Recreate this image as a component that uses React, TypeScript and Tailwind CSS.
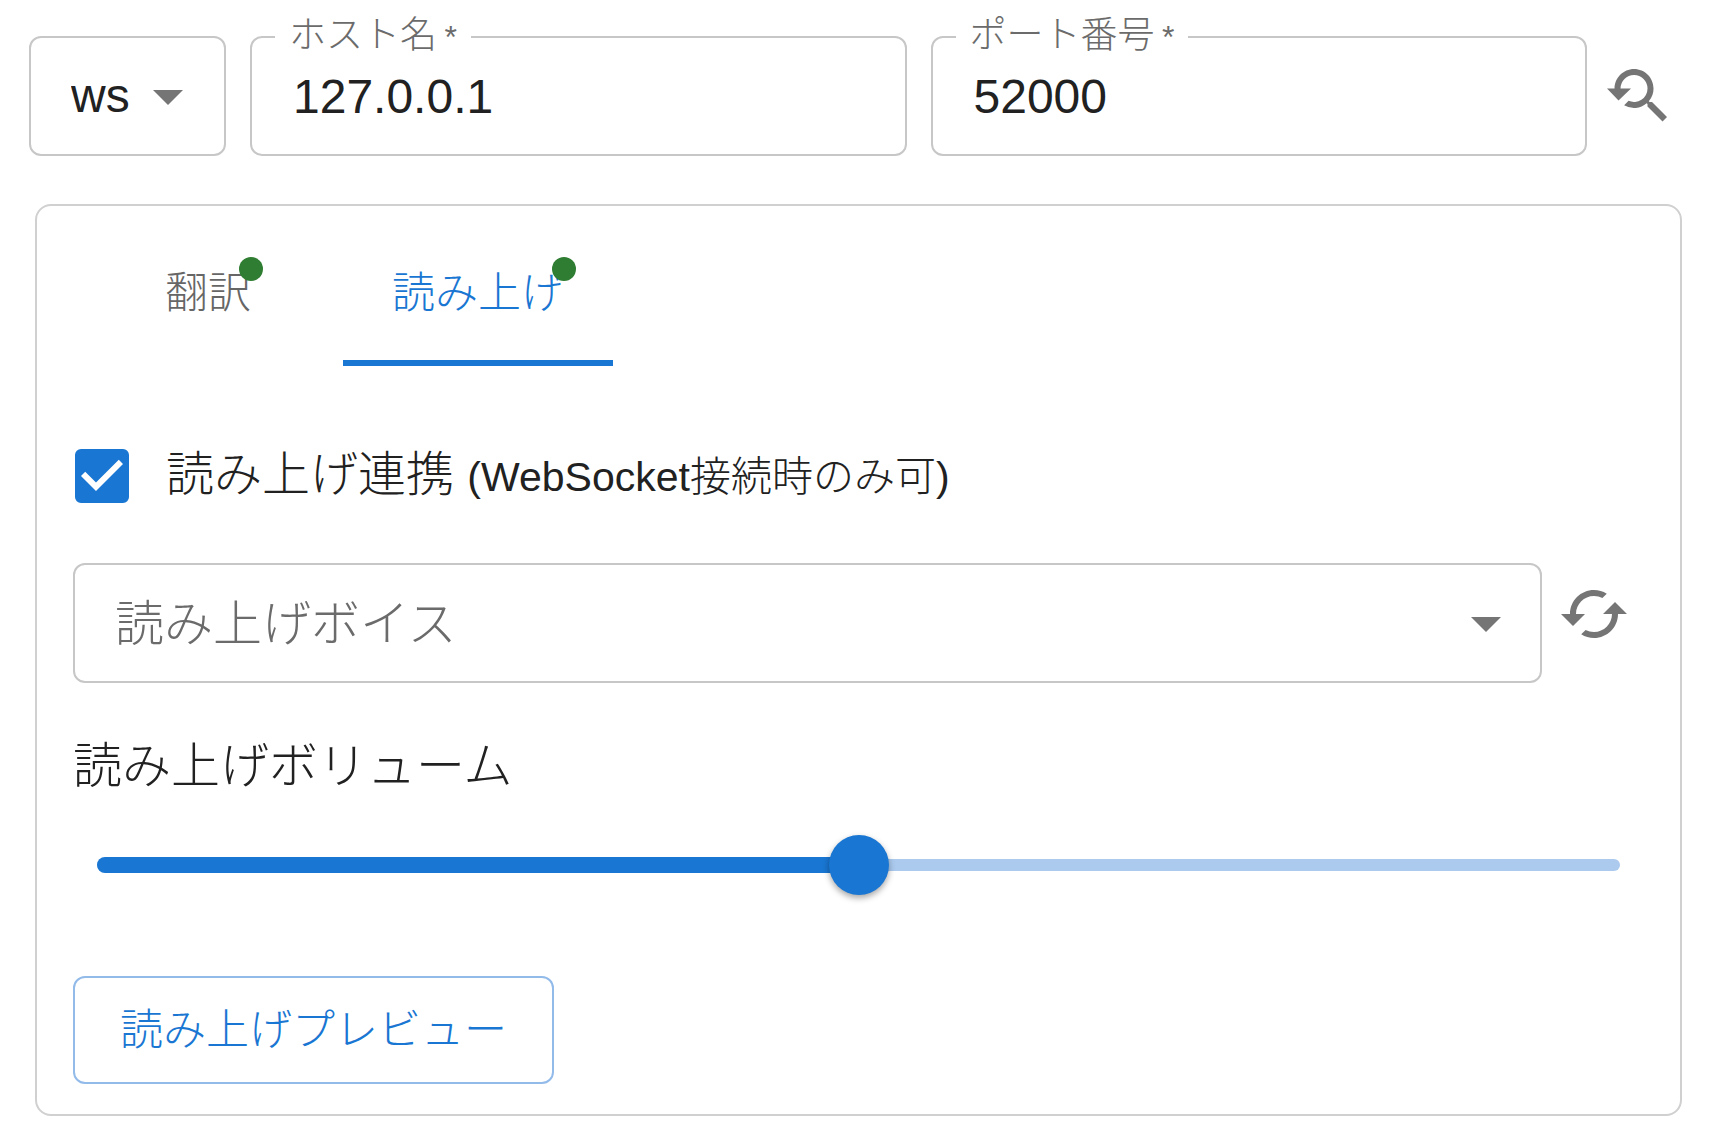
import { useState } from "react";
import { MdArrowDropDown, MdCached, MdYoutubeSearchedFor } from "react-icons/md";

type FieldProps = {
  id: string;
  label: string;
  value: string;
  onChange: (value: string) => void;
};

function OutlinedField({ id, label, value, onChange }: FieldProps) {
  return (
    <div className="relative min-w-0 flex-1">
      <input
        id={id}
        required
        value={value}
        onChange={(e) => onChange(e.target.value)}
        className="h-[120px] w-full rounded-xl border-2 border-[#c7c7c7] bg-white px-[41px] text-5xl text-[#212121] outline-none"
      />
      <label
        htmlFor={id}
        className="absolute left-[25px] -top-6 bg-white px-[14px] text-[37px] leading-[48px] whitespace-nowrap text-[#6b6b6b]"
      >
        {label}&thinsp;<span className="text-[32px]">*</span>
      </label>
    </div>
  );
}

type TabProps = { label: string; active: boolean; onClick: () => void };

function Tab({ label, active, onClick }: TabProps) {
  return (
    <button
      type="button"
      role="tab"
      aria-selected={active}
      onClick={onClick}
      className={
        active
          ? "flex h-36 min-w-[270px] items-center justify-center border-b-6 border-[#1976d2] px-12 pt-1 text-[#1976d2]"
          : "flex h-36 min-w-[270px] items-center justify-center border-b-6 border-transparent px-12 pt-1 text-[#666666]"
      }
    >
      <span className="relative text-[43px] leading-[48px]">
        {label}
        <span className="absolute -top-3 -right-3 size-6 rounded-full bg-[#2e7d32]" />
      </span>
    </button>
  );
}

export default function App() {
  const [scheme, setScheme] = useState("ws");
  const [host, setHost] = useState("127.0.0.1");
  const [port, setPort] = useState("52000");
  const [tab, setTab] = useState("speech");
  const [enabled, setEnabled] = useState(true);
  const [volume, setVolume] = useState(50);

  return (
    <main className="min-h-screen bg-white pt-9 pr-7 pb-[22px] pl-[29px] font-['Liberation_Sans','Noto_Sans_CJK_JP',sans-serif] font-light text-[#212121]">
      <div className="flex items-center gap-6 pr-[9px]">
        <div className="relative shrink-0">
          <select
            aria-label="プロトコル"
            value={scheme}
            onChange={(e) => setScheme(e.target.value)}
            className="h-[120px] w-[197px] appearance-none rounded-xl border-2 border-[#c7c7c7] bg-white pl-10 text-5xl outline-none"
          >
            <option>ws</option>
            <option>wss</option>
          </select>
          <MdArrowDropDown className="pointer-events-none absolute top-6 right-[22px] size-[72px] text-[#757575]" />
        </div>
        <OutlinedField id="host" label="ホスト名" value={host} onChange={setHost} />
        <OutlinedField id="port" label="ポート番号" value={port} onChange={setPort} />
        <button type="button" aria-label="再検索" className="-ml-[10px] shrink-0 text-[#757575]">
          <MdYoutubeSearchedFor className="size-[72px]" />
        </button>
      </div>

      <section className="mt-12 ml-[6px] rounded-2xl border-2 border-[#d0d0d0] px-9 pt-4 pb-[30px]">
        <div role="tablist" className="flex">
          <Tab label="翻訳" active={tab === "translate"} onClick={() => setTab("translate")} />
          <Tab label="読み上げ" active={tab === "speech"} onClick={() => setTab("speech")} />
        </div>

        <label className="mt-[74px] flex h-[72px] items-center gap-[37px] pl-[2px]">
          <span className="relative size-[54px] shrink-0">
            <input
              type="checkbox"
              checked={enabled}
              onChange={(e) => setEnabled(e.target.checked)}
              className="peer block size-[54px] appearance-none rounded-md border-6 border-[#666666] checked:border-[#1976d2] checked:bg-[#1976d2]"
            />
            <svg
              viewBox="3 3 18 18"
              className="pointer-events-none absolute inset-0 hidden size-full fill-white peer-checked:block"
            >
              <path d="M10 17l-5-5 1.41-1.41L10 14.17l7.59-7.59L19 8l-9 9z" />
            </svg>
          </span>
          <span className="text-5xl leading-[72px] whitespace-nowrap">
            読み上げ連携 <small className="text-[41px]">(WebSocket接続時のみ可)</small>
          </span>
        </label>

        <div className="mt-[51px] flex items-start gap-4">
          <div className="relative min-w-0 flex-1">
            <select
              aria-label="読み上げボイス"
              defaultValue=""
              className="h-[120px] w-full appearance-none rounded-xl border-2 border-[#c7c7c7] bg-white pt-1 pl-10 text-[49px] text-[#6b6b6b] outline-none"
            >
              <option value="">読み上げボイス</option>
            </select>
            <MdArrowDropDown className="pointer-events-none absolute top-6 right-5 size-[72px] text-[#757575]" />
          </div>
          <button type="button" aria-label="更新" className="mt-[15px] mr-[14px] shrink-0 text-[#757575]">
            <MdCached className="size-[72px]" />
          </button>
        </div>

        <label htmlFor="volume" className="mt-[47px] block text-[49px] leading-[72px]">
          読み上げボリューム
        </label>
        <div className="relative mx-6 mt-[33px] h-[60px]">
          <div className="absolute inset-x-0 top-6 h-3 rounded-full bg-[#abcaee]" />
          <div
            className="absolute top-[22px] left-0 h-4 rounded-full bg-[#1976d2]"
            style={{ width: `${volume}%` }}
          />
          <input
            id="volume"
            type="range"
            min={0}
            max={100}
            value={volume}
            onChange={(e) => setVolume(Number(e.target.value))}
            className="absolute inset-0 h-[60px] w-full appearance-none bg-transparent outline-none [&::-webkit-slider-thumb]:size-[60px] [&::-webkit-slider-thumb]:appearance-none [&::-webkit-slider-thumb]:rounded-full [&::-webkit-slider-thumb]:bg-[#1976d2] [&::-webkit-slider-thumb]:shadow-[0_3px_6px_rgba(0,0,0,0.35)]"
          />
        </div>

        <button
          type="button"
          className="mt-[81px] flex h-[108px] items-center rounded-xl border-2 border-[#93bbea] px-[45px] text-[43px] leading-[72px] text-[#1976d2]"
        >
          読み上げプレビュー
        </button>
      </section>
    </main>
  );
}
